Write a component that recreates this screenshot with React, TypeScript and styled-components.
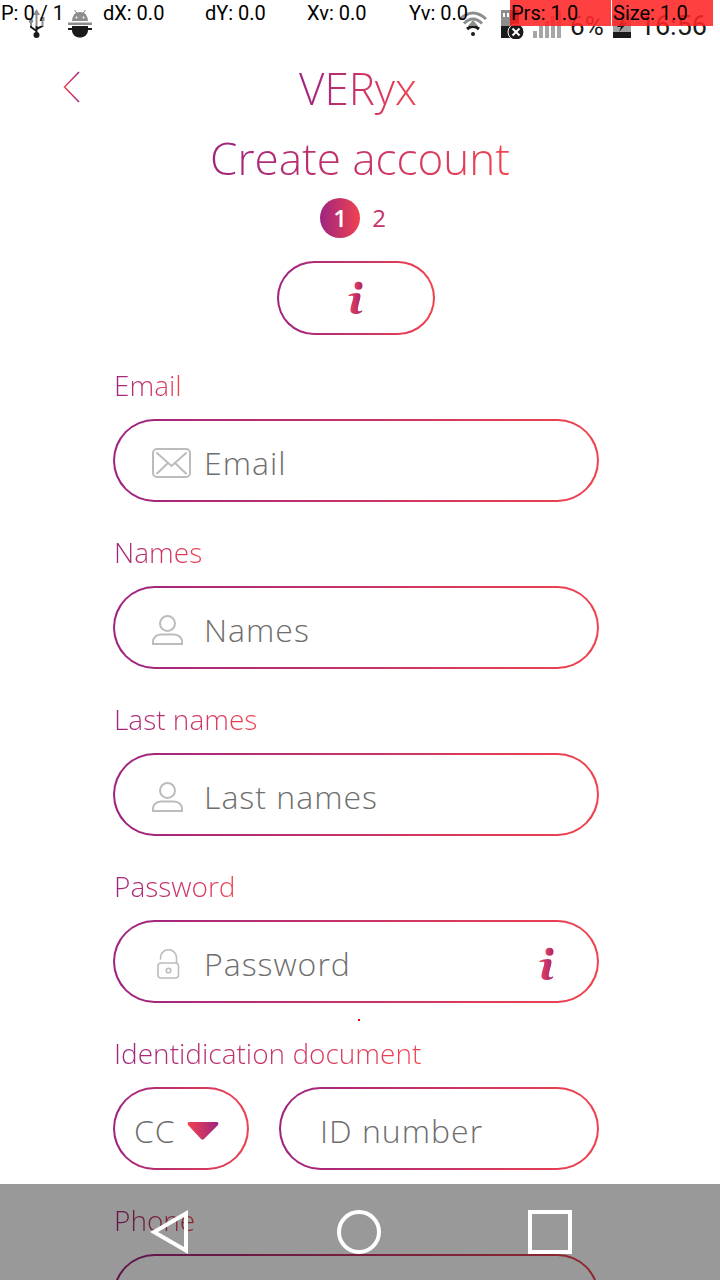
import React from "react";
import styled, { createGlobalStyle, css } from "styled-components";

const PURPLE = "#9e2480";
const RED = "#f0434e";
const GRADIENT = `linear-gradient(90deg, ${PURPLE}, ${RED})`;

const GlobalStyle = createGlobalStyle`
  *, *::before, *::after { box-sizing: border-box; }
  html, body, #root { height: 100%; }
  body {
    margin: 0;
    background: #fff;
    font-family: "Open Sans", sans-serif;
    font-weight: 300;
    overflow: hidden;
  }
`;

const Screen = styled.div`
  position: relative;
  height: 100%;
  overflow: hidden;
`;

const gradientText = css`
  background: ${GRADIENT};
  background-clip: text;
  -webkit-background-clip: text;
  color: transparent;
`;

/* Status bar */

const StatusBar = styled.div`
  display: flex;
  align-items: center;
  justify-content: space-between;
  height: 48px;
  padding: 0 13px 0 24px;
  font-family: Roboto, sans-serif;
  font-weight: 400;
  color: #1a1a1a;
`;

const StatusGroup = styled.div<{ $gap: number }>`
  display: flex;
  align-items: center;
  gap: ${(p) => p.$gap}px;
`;

const StatusIcon = styled.svg`
  display: block;
  flex: none;
`;

const StatusText = styled.span<{ $size: number }>`
  padding-top: 4px;
  font-size: ${(p) => p.$size}px;
  line-height: 32px;
`;

/* Pointer read-out drawn over the status bar */

const PointerBar = styled.div`
  position: absolute;
  inset: 0 0 auto;
  display: grid;
  grid-template-columns: repeat(7, 1fr);
  column-gap: 1px;
  height: 26px;
  padding-right: 7px;
  background: rgba(255, 255, 255, 0.5);
  font: 400 20px/26px Roboto, sans-serif;
  color: #000;
`;

const PointerCell = styled.span<{ $alert?: boolean }>`
  padding-left: 1px;
  white-space: nowrap;
  background: ${(p) => (p.$alert ? "rgba(255, 0, 0, 0.75)" : "transparent")};
`;

/* Header */

const Header = styled.header`
  display: grid;
  grid-template-columns: 64px 1fr 124px;
  align-items: center;
  height: 80px;
  padding-left: 56px;
`;

const BackButton = styled.button`
  display: flex;
  align-items: center;
  width: 32px;
  height: 48px;
  padding: 0 0 2px 7px;
  border: 0;
  background: none;
`;

const Brand = styled.div`
  ${gradientText}
  justify-self: center;
  font-size: 44px;
  line-height: 60px;
`;

const Title = styled.h1`
  ${gradientText}
  width: fit-content;
  margin: 0 auto;
  font-size: 44px;
  line-height: 60px;
  font-weight: 300;
`;

const Steps = styled.ol`
  display: flex;
  justify-content: center;
  gap: 12px;
  margin: 10px 14px 0 0;
  padding: 0;
  list-style: none;
  font-size: 24px;
  line-height: 40px;
`;

const Step = styled.li<{ $current?: boolean }>`
  text-align: center;
  ${(p) =>
    p.$current
      ? css`
          width: 40px;
          border-radius: 50%;
          background: ${GRADIENT};
          color: #fff;
          font-weight: 600;
        `
      : css`
          font-weight: 400;
          color: #c73369;
        `}
`;

/* Form */

const pill = css`
  border: 2px solid transparent;
  border-radius: 42px;
  background: linear-gradient(#fff, #fff) padding-box, ${GRADIENT} border-box;
`;

const InfoArea = styled.div`
  display: flex;
  justify-content: center;
  padding: 23px 8px 28px 0;
`;

const InfoButton = styled.button`
  ${pill}
  display: flex;
  align-items: center;
  justify-content: center;
  width: 158px;
  height: 74px;
  padding: 0;
`;

const Form = styled.form`
  display: flex;
  flex-direction: column;
  gap: 28px;
  padding: 0 121px 0 113px;
`;

const Field = styled.div`
  position: relative;
  display: flex;
  flex-direction: column;
  gap: 12px;
`;

const Label = styled.label`
  ${gradientText}
  align-self: flex-start;
  padding-left: 1px;
  font-size: 28px;
  line-height: 44px;
`;

const Row = styled.div`
  display: flex;
  gap: 30px;
`;

const Pill = styled.div<{ $width?: number; $pad: string }>`
  ${pill}
  display: flex;
  align-items: center;
  flex: none;
  width: ${(p) => (p.$width ? `${p.$width}px` : "auto")};
  min-width: 0;
  height: 83px;
  padding: ${(p) => p.$pad};

  ${Row} > &:last-child {
    flex: 1;
  }
`;

const FieldIcon = styled.span`
  display: flex;
  flex: 0 0 52px;
`;

const entry = css`
  min-width: 0;
  height: 60px;
  padding: 0;
  border: 0;
  outline: 0;
  background: transparent;
  color: #6e6e6e;
  font: 300 32px/44px "Open Sans", sans-serif;
  letter-spacing: 1px;
`;

const Input = styled.input`
  ${entry}
  flex: 1;
  width: 100%;
  &::placeholder {
    color: #6e6e6e;
    opacity: 1;
  }
`;

const Select = styled.select`
  ${entry}
  flex: 1;
  appearance: none;
`;

const HintButton = styled.button`
  display: flex;
  flex: none;
  padding: 0;
  border: 0;
  background: none;
`;

const HintAnchor = styled.span`
  position: absolute;
  bottom: -18px;
  left: calc(50% + 2px);
  width: 2px;
  height: 2px;
  background: #f00;
`;

/* Navigation bar laid over the end of the form */

const NavBar = styled.nav`
  position: absolute;
  inset: auto 0 0;
  display: flex;
  align-items: center;
  justify-content: center;
  gap: 127px;
  height: 96px;
  padding-right: 2px;
  background: rgba(0, 0, 0, 0.4);
`;

const NavButton = styled.button`
  display: flex;
  width: 64px;
  padding: 0 10px;
  border: 0;
  background: none;
`;

const InfoGlyph = ({ id }: { id: string }) => (
  <svg width="16" height="34" viewBox="0 0 16 34" aria-hidden="true">
    <defs>
      <linearGradient id={id}>
        <stop offset="0" stopColor={RED} />
        <stop offset="1" stopColor={PURPLE} />
      </linearGradient>
    </defs>
    <g fill={`url(#${id})`}>
      <circle cx="10.500" cy="4.800" r="4" />
      <path d="M0.500 14C4 12.500 9 11.200 11.500 12.500C13.500 14 12 18 11 22C10 26 9 30 11 30.300C12.200 30.300 13.500 29.500 14.500 29.500C14 31.500 11 33 7.500 33C2 33 2 29 3 25.500C4 21 6 16 5 15C4 14.300 2 15 0.500 15Z" />
    </g>
  </svg>
);

const MailIcon = () => (
  <svg width="40" height="30" viewBox="0 0 40 30" fill="none" stroke="#bcbcbc" strokeWidth="2" aria-hidden="true">
    <rect x="1" y="1" width="37" height="28" rx="4" />
    <path d="M5 5L19.500 18L34 5M5 25.500L16 15M34 25.500L23 15" strokeLinecap="round" />
  </svg>
);

const PersonIcon = () => (
  <svg width="32" height="30" viewBox="0 0 32 30" fill="none" stroke="#bcbcbc" strokeWidth="2" aria-hidden="true">
    <circle cx="15.500" cy="8.500" r="7.500" />
    <path d="M1 29V27C1 23 4 19.500 9 19.500H22C27 19.500 30 23 30 27V29Z" />
  </svg>
);

const LockIcon = () => (
  <svg width="32" height="30" viewBox="0 0 32 30" fill="none" stroke="#bcbcbc" strokeWidth="1.600" aria-hidden="true">
    <path d="M8.500 10V8.500A8 7.700 0 0 1 24.500 8.500V14" strokeLinecap="round" />
    <rect x="6" y="14" width="20.500" height="15" rx="3" />
    <circle cx="16.500" cy="21.500" r="2.300" />
  </svg>
);

const fields = [
  { id: "email", label: "Email", type: "email", Icon: MailIcon },
  { id: "names", label: "Names", type: "text", Icon: PersonIcon },
  { id: "last-names", label: "Last names", type: "text", Icon: PersonIcon },
  { id: "password", label: "Password", type: "password", Icon: LockIcon, hint: true },
];

const readings = ["P: 0 / 1", "dX: 0.0", "dY: 0.0", "Xv: 0.0", "Yv: 0.0", "Prs: 1.0", "Size: 1.0"];

export default function App() {
  return (
    <Screen>
      <GlobalStyle />
      <StatusBar>
        <StatusGroup $gap={18}>
          <StatusIcon width="26" height="30" viewBox="0 0 26 30" fill="#1a1a1a">
            <path d="M12.500 0L16 6H9Z" />
            <circle cx="12.500" cy="26" r="3" />
            <rect x="16.500" y="8" width="4" height="4" />
            <circle cx="7" cy="12" r="2.300" />
            <path d="M12.500 5V26M7 12V18L12.500 22M18.500 11V17L12.500 20" fill="none" stroke="#1a1a1a" strokeWidth="2" />
          </StatusIcon>
          <StatusIcon width="24" height="30" viewBox="0 0 24 30" fill="#1a1a1a">
            <path d="M4 12C4 8 6 5 8 4L6 1L7 1L9 3.500Q12 2.500 15 3.500L17 1L18 1L16 4C18 5 20 8 20 12ZM0 13.500H24V16H0ZM4 17H20V19H24V21H20C20 26 16 28.500 12 28.500S4 26 4 21H0V19H4Z" />
            <circle cx="8.500" cy="8.500" r="1" fill="#fff" />
            <circle cx="15.500" cy="8.500" r="1" fill="#fff" />
          </StatusIcon>
        </StatusGroup>
        <StatusGroup $gap={9}>
          <StatusIcon width="32" height="28" viewBox="0 0 32 28">
            <g fill="none" stroke="#1a1a1a" strokeWidth="3">
              <path d="M1 9Q14 -3 27 9" />
              <path d="M5 13.500Q14 4.500 23 13.500" />
              <path d="M8 19Q14 14 20 19" />
            </g>
            <path d="M14 10L19 16H9Z" fill="#1a1a1a" />
            <circle cx="14" cy="24" r="2" fill="#1a1a1a" />
          </StatusIcon>
          <StatusIcon width="24" height="30" viewBox="0 0 24 30">
            <path d="M1 1H19V29H1Z" fill="#1a1a1a" />
            <path d="M3 4H5V8H3ZM7 4H9V8H7Z" fill="#fff" />
            <circle cx="16" cy="23" r="8" fill="#1a1a1a" stroke="#fff" />
            <path d="M12.500 19.500L19.500 26.500M19.500 19.500L12.500 26.500" stroke="#fff" strokeWidth="2" />
          </StatusIcon>
          <StatusIcon width="28" height="28" viewBox="0 0 28 28" fill="#a6a6a6">
            <path d="M0 21H4V28H0ZM6 16H10V28H6ZM12 11H16V28H12ZM18 6H22V28H18ZM24 0H28V28H24Z" />
          </StatusIcon>
          <StatusText $size={26}>6%</StatusText>
          <StatusIcon width="18" height="28" viewBox="0 0 18 28">
            <path d="M0 4H6V1H12V4H18V28H0Z" fill="#a0a0a0" />
            <path d="M0 22H18V28H0Z" fill="#1a1a1a" />
            <path d="M11 8L4 17H8L6 22L14 13H10Z" fill="#1a1a1a" />
          </StatusIcon>
          <StatusText $size={27}>16:56</StatusText>
        </StatusGroup>
      </StatusBar>
      <PointerBar>
        {readings.map((text, i) => (
          <PointerCell key={text} $alert={i > 4}>{text}</PointerCell>
        ))}
      </PointerBar>

      <Header>
        <BackButton type="button" aria-label="Back">
          <svg width="17" height="32" viewBox="0 0 17 32" fill="none">
            <defs>
              <linearGradient id="back">
                <stop offset="0" stopColor={RED} />
                <stop offset="1" stopColor={PURPLE} />
              </linearGradient>
            </defs>
            <path d="M16 1L1.500 16L16 31" stroke="url(#back)" strokeWidth="1.500" />
          </svg>
        </BackButton>
        <Brand>VERyx</Brand>
      </Header>
      <Title>Create account</Title>
      <Steps>
        <Step $current>1</Step>
        <Step>2</Step>
      </Steps>
      <InfoArea>
        <InfoButton type="button" aria-label="Information">
          <InfoGlyph id="info-main" />
        </InfoButton>
      </InfoArea>

      <Form>
        {fields.map(({ id, label, type, Icon, hint }) => (
          <Field key={id}>
            <Label htmlFor={id}>{label}</Label>
            <Pill $pad="4px 42px 0 37px">
              <FieldIcon><Icon /></FieldIcon>
              <Input id={id} type={type} placeholder={label} />
              {hint && (
                <HintButton type="button" aria-label="Password help">
                  <InfoGlyph id="info-password" />
                </HintButton>
              )}
            </Pill>
            {hint && <HintAnchor />}
          </Field>
        ))}
        <Field>
          <Label htmlFor="document">Identidication document</Label>
          <Row>
            <Pill $width={136} $pad="4px 28px 0 19px">
              <Select aria-label="Document type"><option>CC</option></Select>
              <svg width="32" height="20" viewBox="0 0 32 20" aria-hidden="true">
                <defs>
                  <linearGradient id="arrow">
                    <stop offset="0" stopColor={RED} />
                    <stop offset="1" stopColor={PURPLE} />
                  </linearGradient>
                </defs>
                <path d="M2 1H30Q32 1 31 4L17 18Q15.500 19.500 14 18L1 4Q0 1 2 1Z" fill="url(#arrow)" />
              </svg>
            </Pill>
            <Pill $pad="4px 36px 0 39px">
              <Input id="document" placeholder="ID number" />
            </Pill>
          </Row>
        </Field>
        <Field>
          <Label htmlFor="phone">Phone</Label>
          <Pill $pad="4px 42px 0 37px">
            <Input id="phone" type="tel" />
          </Pill>
        </Field>
      </Form>

      <NavBar>
        <NavButton type="button" aria-label="Back">
          <svg width="44" height="44" viewBox="0 0 44 44" fill="none" stroke="#fff" strokeWidth="4">
            <path d="M40 3.500V40.500L8 22Z" />
          </svg>
        </NavButton>
        <NavButton type="button" aria-label="Home">
          <svg width="44" height="44" viewBox="0 0 44 44" fill="none" stroke="#fff" strokeWidth="4">
            <circle cx="22" cy="22" r="20" />
          </svg>
        </NavButton>
        <NavButton type="button" aria-label="Recent apps">
          <svg width="44" height="44" viewBox="0 0 44 44" fill="none" stroke="#fff" strokeWidth="4">
            <rect x="2" y="2" width="40" height="40" />
          </svg>
        </NavButton>
      </NavBar>
    </Screen>
  );
}
